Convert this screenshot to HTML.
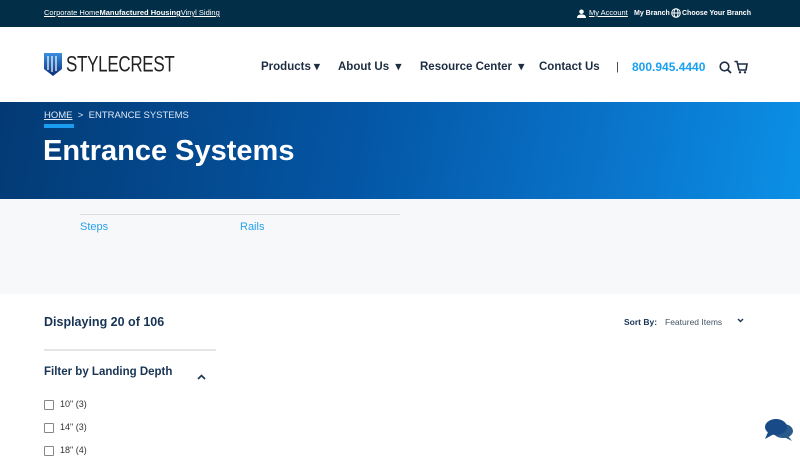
<!DOCTYPE html>
<html><head><style>
*{margin:0;padding:0;box-sizing:border-box}
body{width:800px;height:450px;overflow:hidden;font-family:"Liberation Sans",sans-serif;background:#fff;position:relative}
.a{position:absolute;white-space:nowrap}
.top{top:0;left:0;width:800px;height:27px;background:#032e48;color:#fff;font-size:7.5px}
.top .a{line-height:10px}
.nav{font-size:11.5px;font-weight:bold;color:#1d2d42;line-height:14px}
.hero{top:102px;left:0;width:800px;height:97px;background:linear-gradient(100deg,#033a74 0%,#0456a5 45%,#0a78cf 80%,#0b90e6 100%)}
.sub{top:199px;left:0;width:800px;height:95px;background:#f7f8fa}
</style></head><body>
<div class="a top">
<div class="a" style="left:44px;top:8px"><u>Corporate Home</u><b><u>Manufactured Housing</u></b><u>Vinyl Siding</u></div>
<svg class="a" style="left:577px;top:9px" width="9" height="9" viewBox="0 0 10 10"><circle cx="5" cy="3" r="2.5" fill="#fff"/><path d="M0 10 Q0 6 5 6 Q10 6 10 10Z" fill="#fff"/></svg>
<div class="a" style="left:589px;top:8px"><u>My Account</u></div>
<div class="a" style="left:634px;top:9px;font-weight:bold;font-size:7px">My Branch</div>
<svg class="a" style="left:671px;top:8px" width="10" height="10" viewBox="0 0 10 10"><circle cx="5" cy="5" r="4.3" fill="none" stroke="#fff"/><ellipse cx="5" cy="5" rx="2" ry="4.3" fill="none" stroke="#fff"/><path d="M1 5H9" stroke="#fff"/></svg>
<div class="a" style="left:682px;top:9px;font-weight:bold;font-size:7px">Choose Your Branch</div>
</div>
<svg class="a" style="left:44px;top:53px" width="18" height="23" viewBox="0 0 18 23"><defs><linearGradient id="g" x1="0" y1="0" x2="0" y2="1"><stop offset="0" stop-color="#3a8fe0"/><stop offset="1" stop-color="#0b2f7a"/></linearGradient></defs><path d="M0 0H18V16L9 23L0 16Z" fill="url(#g)"/><path d="M4 3V17M8 3V19M12 3V18" stroke="#fff" stroke-width="1.2"/></svg>
<div class="a" style="left:66px;top:52px;font-size:17px;letter-spacing:-0.3px;color:#222;transform:scaleY(1.3);transform-origin:top left">STYLECREST</div>
<div class="a nav" style="left:261px;top:60px">Products ▾</div>
<div class="a nav" style="left:338px;top:60px">About Us &nbsp;▾</div>
<div class="a nav" style="left:420px;top:60px">Resource Center &nbsp;▾</div>
<div class="a nav" style="left:539px;top:60px">Contact Us</div>
<div class="a" style="left:616px;top:61px;font-size:11px;color:#333">|</div>
<div class="a nav" style="left:632px;top:60px;color:#1aa0f0;font-size:12px">800.945.4440</div>
<svg class="a" style="left:719px;top:61px" width="13" height="13" viewBox="0 0 13 13"><circle cx="5.5" cy="5.5" r="4.3" fill="none" stroke="#1d2d42" stroke-width="1.6"/><path d="M8.7 8.7L12 12" stroke="#1d2d42" stroke-width="1.8"/></svg>
<svg class="a" style="left:734px;top:60px" width="14" height="14" viewBox="0 0 14 14"><path d="M0.5 1.5H3L5 10H12L13 4H4" fill="none" stroke="#1d2d42" stroke-width="1.6"/><circle cx="6" cy="12.3" r="1.2" fill="#1d2d42"/><circle cx="11" cy="12.3" r="1.2" fill="#1d2d42"/></svg>
<div class="a hero">
<div class="a" style="left:44px;top:8px;font-size:9.5px;color:#dfe8f4"><u>HOME</u> &nbsp;&gt; &nbsp;ENTRANCE SYSTEMS</div>
<div class="a" style="left:44px;top:22px;width:30px;height:4px;background:#1a9cf0"></div>
<div class="a" style="left:43px;top:33px;font-size:29px;font-weight:bold;color:#fff">Entrance Systems</div>
</div>
<div class="a sub">
<div class="a" style="left:80px;top:15px;width:320px;height:1px;background:#ddd"></div>
<div class="a" style="left:80px;top:22px;font-size:11px;color:#2aa0ea">Steps</div>
<div class="a" style="left:240px;top:22px;font-size:11px;color:#2aa0ea">Rails</div>
</div>
<div class="a" style="left:44px;top:315px;font-size:12.5px;font-weight:bold;color:#173454">Displaying 20 of 106</div>
<div class="a" style="left:44px;top:349px;width:172px;height:2px;background:#e5e5e5"></div>
<div class="a" style="left:44px;top:366px;font-size:11.5px;font-weight:bold;color:#173454">Filter by Landing Depth</div>
<svg class="a" style="left:197px;top:374px" width="9" height="6" viewBox="0 0 9 6"><path d="M1 5L4.5 1.5L8 5" fill="none" stroke="#173454" stroke-width="1.6"/></svg>
<div class="a" style="left:44px;top:400px;width:10px;height:10px;border:1px solid #888;border-radius:1px"></div>
<div class="a" style="left:60px;top:399px;font-size:9px;color:#333">10" (3)</div>
<div class="a" style="left:44px;top:423px;width:10px;height:10px;border:1px solid #888;border-radius:1px"></div>
<div class="a" style="left:60px;top:422px;font-size:9px;color:#333">14" (3)</div>
<div class="a" style="left:44px;top:446px;width:10px;height:10px;border:1px solid #888;border-radius:1px"></div>
<div class="a" style="left:60px;top:445px;font-size:9px;color:#333">18" (4)</div>
<div class="a" style="left:624px;top:317px;font-size:8.5px;font-weight:bold;color:#173454">Sort By:</div>
<div class="a" style="left:665px;top:317px;font-size:8.5px;color:#456">Featured Items</div>
<svg class="a" style="left:737px;top:318px" width="7" height="5" viewBox="0 0 7 5"><path d="M1 1L3.5 3.5L6 1" fill="none" stroke="#173454" stroke-width="1.4"/></svg>
<svg class="a" style="left:764px;top:418px" width="30" height="24" viewBox="0 0 30 24"><ellipse cx="19" cy="13" rx="10" ry="7" fill="#2a5a8a"/><path d="M24 18L28 23L20 19Z" fill="#2a5a8a"/><ellipse cx="12" cy="9" rx="11" ry="8" fill="#174a86"/><path d="M4 14L1 21L10 16Z" fill="#174a86"/></svg>
</body></html>
